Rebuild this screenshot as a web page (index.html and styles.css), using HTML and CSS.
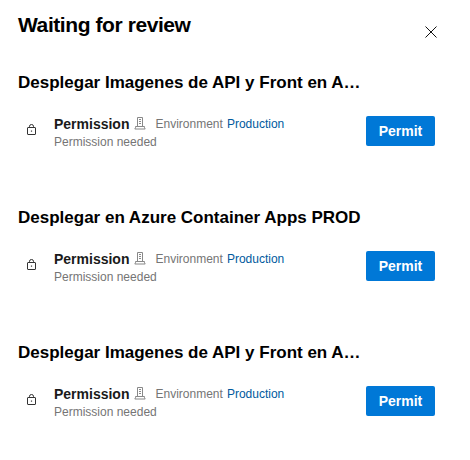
FILE: index.html
```html
<!DOCTYPE html>
<html lang="en">
<head>
<meta charset="utf-8">
<title>Waiting for review</title>
<link rel="stylesheet" href="styles.css">
</head>
<body>
<svg class="defs" width="0" height="0" aria-hidden="true">
  <symbol id="lock" viewBox="0 0 12 12"><path d="M2 3.5h7q.5 0 .5.5v6q0 .5-.5.5H2q-.5 0-.5-.5V4q0-.5.5-.5zM3.5 3.5V2.3a2 1.8 0 0 1 4 0v1.2"/><path class="dot" d="M4.9 6.5h1.2v1.2H4.9z"/></symbol>
  <symbol id="env" viewBox="0 0 12 13"><path d="M3.5 9.5v-9h5v9M1.5 9.5h9v1.3l.7 1.2H.8l.7-1.2zM5 2.5h2M5 4.5h2M5 6.5h2"/></symbol>
</svg>
<main class="panel">
  <header class="header">
    <h1 class="title">Waiting for review</h1>
    <button class="close" aria-label="Close"><svg viewBox="0 0 12 12"><path d="M.5.5l11 11M11.5.5l-11 11"/></svg></button>
  </header>
  <section class="stage">
    <h2 class="stage-title">Desplegar Imagenes de API y Front en A…</h2>
    <div class="check">
      <svg class="lock"><use href="#lock"/></svg>
      <div class="info">
        <div class="line"><strong class="name">Permission</strong><svg class="env"><use href="#env"/></svg><span class="kind">Environment</span><a class="link">Production</a></div>
        <div class="status">Permission needed</div>
      </div>
      <button class="permit">Permit</button>
    </div>
  </section>
  <section class="stage">
    <h2 class="stage-title">Desplegar en Azure Container Apps PROD</h2>
    <div class="check">
      <svg class="lock"><use href="#lock"/></svg>
      <div class="info">
        <div class="line"><strong class="name">Permission</strong><svg class="env"><use href="#env"/></svg><span class="kind">Environment</span><a class="link">Production</a></div>
        <div class="status">Permission needed</div>
      </div>
      <button class="permit">Permit</button>
    </div>
  </section>
  <section class="stage">
    <h2 class="stage-title">Desplegar Imagenes de API y Front en A…</h2>
    <div class="check">
      <svg class="lock"><use href="#lock"/></svg>
      <div class="info">
        <div class="line"><strong class="name">Permission</strong><svg class="env"><use href="#env"/></svg><span class="kind">Environment</span><a class="link">Production</a></div>
        <div class="status">Permission needed</div>
      </div>
      <button class="permit">Permit</button>
    </div>
  </section>
</main>
</body>
</html>
```

FILE: styles.css
```css
* { box-sizing: border-box; }
body { margin: 0; background: #fff; font-family: "Liberation Sans", Arial, sans-serif; }
h1, h2 { margin: 0; color: #000; }
button { padding: 0; border: 0; font-family: inherit; }
svg { display: block; flex: none; fill: none; stroke: currentColor; }
.defs { position: absolute; }
.panel { height: 460px; padding: 0 35px 0 18px; overflow: hidden; }
.header { display: flex; justify-content: space-between; height: 67px; padding-top: 11px; }
.title { font-size: 21px; line-height: 28px; letter-spacing: -0.42px; }
.close { width: 12px; height: 12px; margin: 15px -2px 0 0; background: none; color: #111; }
.close svg { width: 12px; height: 12px; }
.stage { height: 135px; padding-top: 4px; }
.stage-title { font-size: 17px; line-height: 24px; white-space: nowrap; }
.check { display: flex; margin-top: 20px; }
.lock { width: 12px; height: 12px; margin: 9px 16px 0 8px; color: #333; }
.dot { fill: currentColor; stroke: none; }
.info { flex: 1; }
.line { display: flex; align-items: center; height: 18px; font-size: 12px; }
.name { width: 76px; font-size: 14px; color: #1a1a1a; }
.env { width: 12px; height: 13px; margin: -2px 9.5px 0 4px; color: #888; }
.kind { margin-right: 4px; color: #757575; }
.link { color: #005a9e; }
.status { font-size: 12px; line-height: 18px; color: #757575; }
.permit { width: 69px; height: 30px; margin-top: 1px; border-radius: 2px; background: #0078d7; color: #fff; font-size: 14px; font-weight: 700; }
```
